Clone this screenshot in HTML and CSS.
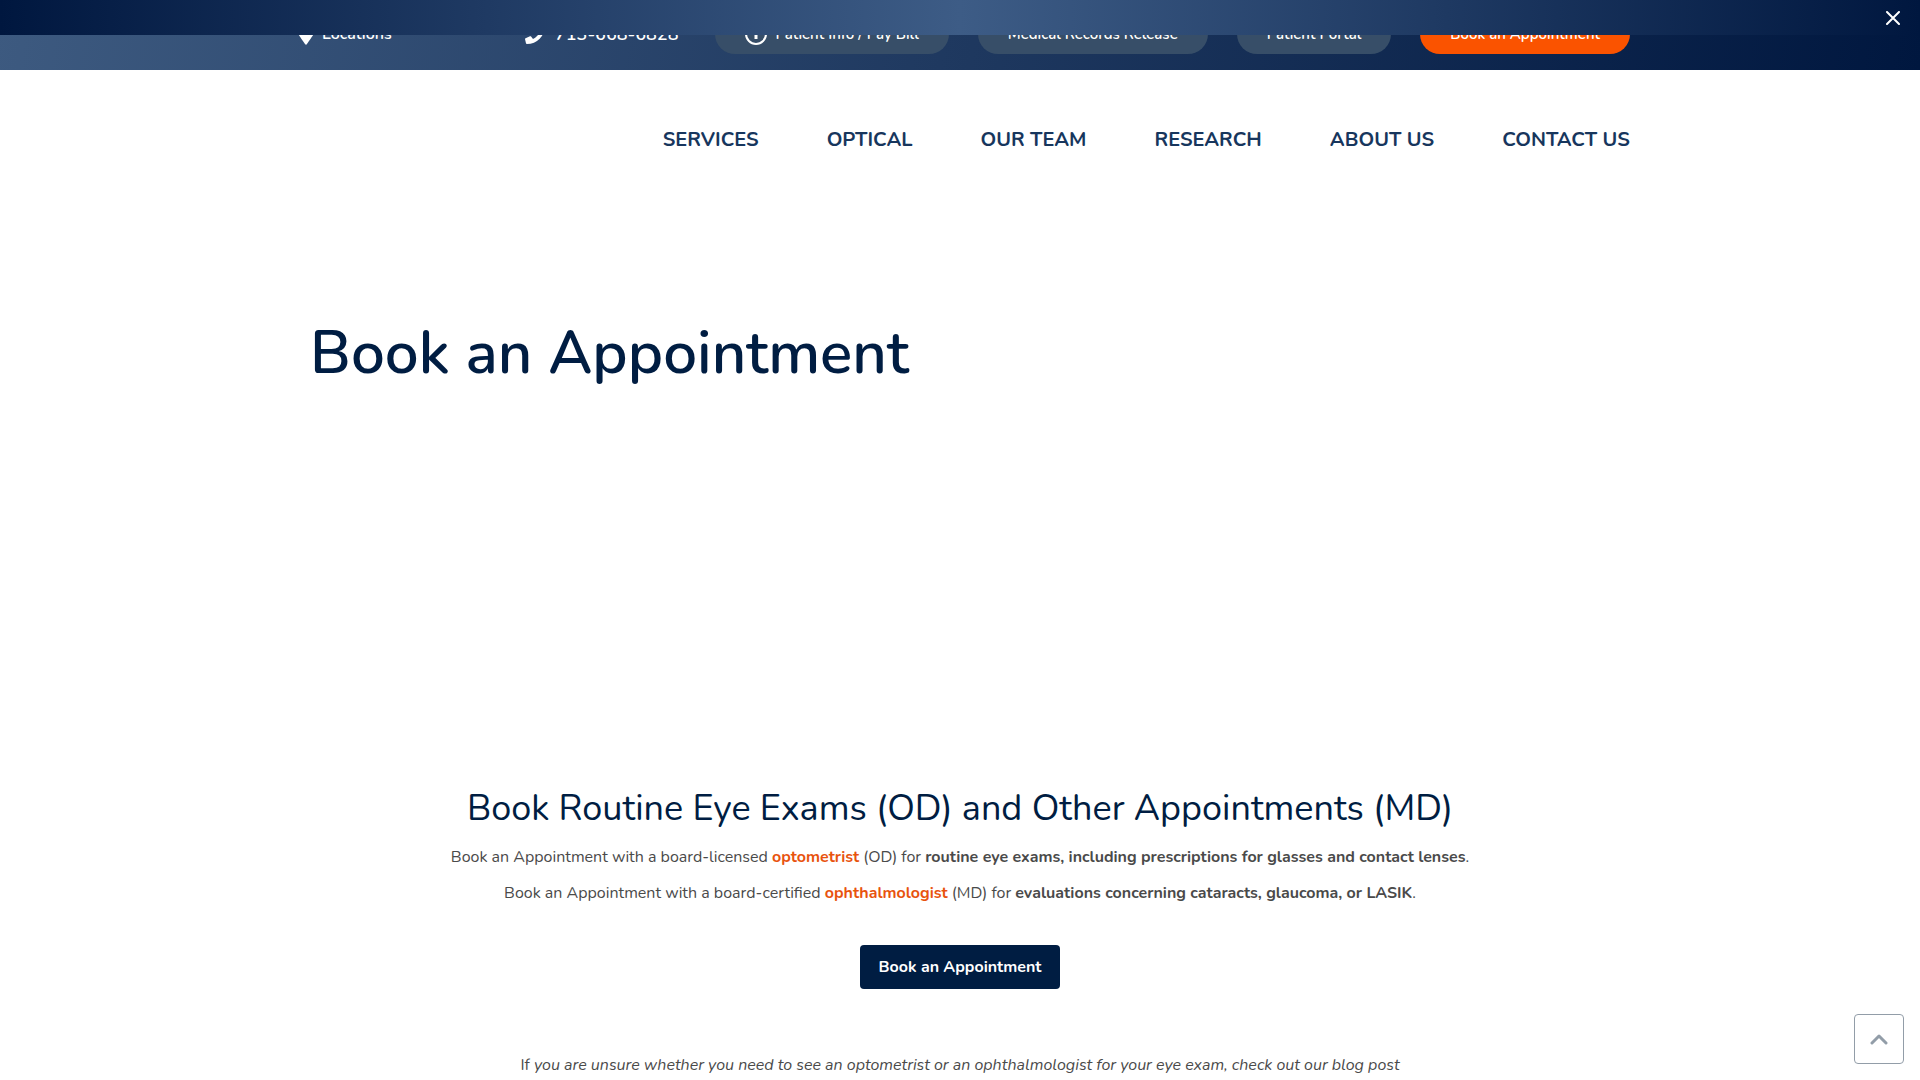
FILE: index.html
```html
<!DOCTYPE html>
<html lang="en">
<head>
    <meta charset="UTF-8">
    <meta name="viewport" content="width=device-width, initial-scale=1.0">
    <title>Book an Appointment</title>
    <link rel="stylesheet" href="styles.css">
</head>
<body>
    <!-- announcement bar, stays over the header -->
    <div class="notice">
        <button type="button" class="notice_close" aria-label="Close">
            <svg width="14" height="14" viewBox="0 0 14 14"><path d="M1 1L13 13M13 1L1 13" fill="none" stroke="#fff" stroke-width="2" stroke-linecap="round"/></svg>
        </button>
    </div>

    <header>
        <div class="topbar">
            <div class="container topbar_row">
                <a href="#" class="locations">
                    <svg width="16" height="22" viewBox="0 0 384 512"><path fill="#fff" d="M172 502C27 291 0 270 0 192 0 86 86 0 192 0s192 86 192 192c0 78-27 99-172 310-9 13-30 13-40 0zm20-230a80 80 0 1 0 0-160 80 80 0 0 0 0 160z"/></svg>
                    <span>Locations</span>
                </a>
                <a href="tel:7136686828" class="phone">
                    <svg width="20" height="20" viewBox="0 0 512 512"><path fill="#fff" d="M493 25L389 1c-11-3-23 3-27 14l-48 112c-4 10-1 21 7 28l61 50c-36 76-99 140-177 177l-50-61c-7-8-18-11-28-7L15 362C4 367-2 378 1 389l24 104c3 11 12 19 24 19 256 0 463-207 463-463 0-12-8-22-19-24z"/></svg>
                    <span>713-668-6828</span>
                </a>
                <div class="pills">
                    <a href="#" class="pill">
                        <svg width="22" height="22" viewBox="0 0 22 22"><circle cx="11" cy="11" r="10" fill="none" stroke="#fff" stroke-width="2"/><circle cx="11" cy="6" r="1.500" fill="#fff"/><path d="M11 9V16" stroke="#fff" stroke-width="3"/></svg>
                        Patient Info / Pay Bill
                    </a>
                    <a href="#" class="pill">Medical Records Release</a>
                    <a href="#" class="pill">Patient Portal</a>
                    <a href="#" class="pill orange">Book an Appointment</a>
                </div>
            </div>
        </div>
        <nav class="container main_nav">
            <a href="#">SERVICES</a>
            <a href="#">OPTICAL</a>
            <a href="#">OUR TEAM</a>
            <a href="#">RESEARCH</a>
            <a href="#">ABOUT US</a>
            <a href="#">CONTACT US</a>
        </nav>
    </header>

    <main>
        <div class="container banner">
            <h1>Book an Appointment</h1>
        </div>
        <div class="content">
            <h2>Book Routine Eye Exams (OD) and Other Appointments (MD)</h2>
            <p>Book an Appointment with a board-licensed <a href="#">optometrist</a> (OD) for <strong>routine eye exams, including prescriptions for glasses and contact lenses</strong>.</p>
            <p>Book an Appointment with a board-certified <a href="#">ophthalmologist</a> (MD) for <strong>evaluations concerning cataracts, glaucoma, or LASIK</strong>.</p>
            <button type="button" class="book_btn">Book an Appointment</button>
            <p>If <em>you are unsure whether you need to see an optometrist or an ophthalmologist for your eye exam, check out our blog post</em></p>
        </div>
    </main>

    <button type="button" class="to_top" aria-label="Back to top">
        <svg width="18" height="12" viewBox="0 0 18 12"><path d="M2 10L9 3L16 10" fill="none" stroke="#929da8" stroke-width="3" stroke-linecap="round" stroke-linejoin="round"/></svg>
    </button>
</body>
</html>
```

FILE: styles.css
```css
* { box-sizing: border-box; }
body { margin: 0; font-family: Nunito, Lato, sans-serif; font-size: 16px; line-height: 24px; color: #4a4a4a; background-color: #fff; }
a { text-decoration: none; }
button { font-family: inherit; cursor: pointer; }
svg { display: block; flex-shrink: 0; }
.container { max-width: 1340px; margin: 0 auto; }

.notice { position: fixed; top: 0; left: 0; right: 0; z-index: 10; height: 35px; padding-right: 20px; display: flex; align-items: center; justify-content: flex-end; background: linear-gradient(90deg, #00173f, #3d5c86 50%, #00173f); }
.notice_close { padding: 0; border: none; background: none; }

.topbar { background: linear-gradient(100deg, #3d5a80, #00173f); }
.topbar_row { display: flex; align-items: center; height: 70px; padding: 0 0 2px 8px; }
.topbar a { display: flex; align-items: center; gap: 8px; color: #fff; font-weight: 600; white-space: nowrap; }
.locations { flex: 1; }
.topbar .phone { gap: 10px; font-size: 18px; }
.pills { display: flex; gap: 29px; margin-left: 37px; }
.topbar .pill { height: 40px; padding: 0 30px; border-radius: 20px; background-color: #374e68; font-size: 15px; }
.topbar .orange { background-color: #fa5300; }

.main_nav { display: flex; justify-content: flex-end; align-items: center; gap: 68px; height: 140px; }
.main_nav a { color: #17365d; font-size: 20px; font-weight: bold; }

.banner { height: 561px; padding: 101px 20px 0; }
h1 { margin: 0; color: #001d42; font-size: 60px; line-height: 84px; font-weight: 600; }

.content { padding: 8px 20px 0; text-align: center; }
h2 { margin: 0 0 6px; color: #001d42; font-size: 36px; line-height: 60px; font-weight: normal; }
.content p { margin: 0 0 12px; }
.content a { color: #e8530e; font-weight: bold; }
.book_btn { margin: 28px 0 64px; height: 44px; padding: 0 19px; border: none; border-radius: 4px; background-color: #001d42; color: #fff; font-size: 16px; font-weight: bold; }

.to_top { position: fixed; right: 16px; bottom: 16px; width: 50px; height: 50px; display: flex; align-items: center; justify-content: center; border: 1px solid #929da8; border-radius: 4px; background-color: #fff; }
```
